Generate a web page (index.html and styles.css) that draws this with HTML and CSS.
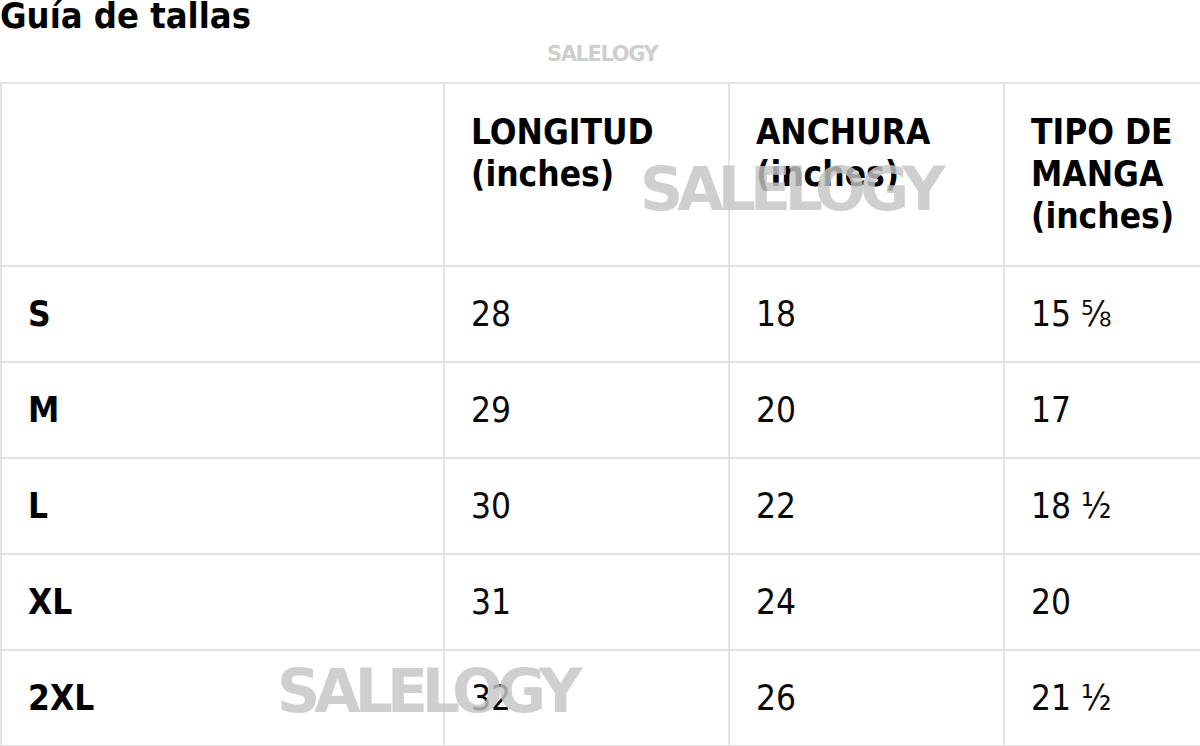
FILE: index.html
```html
<!DOCTYPE html>
<html lang="es">
<head>
<meta charset="utf-8">
<title>Guía de tallas</title>
<link rel="stylesheet" href="styles.css">
</head>
<body>
<div class="page">
  <h1 class="title">Guía de tallas</h1>
  <table class="sizes">
    <colgroup>
      <col class="c1"><col class="c2"><col class="c3"><col class="c4">
    </colgroup>
    <thead>
      <tr>
        <th></th>
        <th>LONGITUD<br>(inches)</th>
        <th>ANCHURA<br>(inches)</th>
        <th>TIPO DE<br>MANGA<br>(inches)</th>
      </tr>
    </thead>
    <tbody>
      <tr><th>S</th><td>28</td><td>18</td><td>15 ⅝</td></tr>
      <tr><th>M</th><td>29</td><td>20</td><td>17</td></tr>
      <tr><th>L</th><td>30</td><td>22</td><td>18 ½</td></tr>
      <tr><th>XL</th><td>31</td><td>24</td><td>20</td></tr>
      <tr><th>2XL</th><td>32</td><td>26</td><td>21 ½</td></tr>
    </tbody>
  </table>
  <div class="wm wm-small">SALELOGY</div>
  <div class="wm wm-big wm-top">SALELOGY</div>
  <div class="wm wm-big wm-bottom">SALELOGY</div>
</div>
</body>
</html>
```

FILE: styles.css
```css
html, body {
  margin: 0;
  padding: 0;
  background: #fff;
  overflow: hidden;
}
.page {
  position: relative;
  width: 1200px;
  height: 746px;
  overflow: hidden;
  font-family: "DejaVu Sans Condensed", "DejaVu Sans", sans-serif;
  font-stretch: semi-condensed;
  color: #0a0a0a;
}
.title {
  margin: 0;
  font-size: 36px;
  line-height: 32px;
  font-weight: 700;
  color: #000;
}
.sizes {
  margin-top: 50px;
  width: 1210px;
  table-layout: fixed;
  border-collapse: collapse;
  font-size: 35px;
  line-height: 42px;
}
.c1 { width: 443px; }
.c2 { width: 285px; }
.c3 { width: 275px; }
.c4 { width: 207px; }
.sizes th, .sizes td {
  border: 2px solid #e4e4e4;
  padding: 0 0 0 26px;
  text-align: left;
}
.sizes thead th {
  vertical-align: top;
  padding-top: 27px;
  padding-bottom: 28px;
  font-weight: 700;
  color: #000;
}
.sizes tbody tr {
  height: 96px;
}
.sizes tbody th {
  font-weight: 700;
  color: #000;
  vertical-align: middle;
}
.sizes tbody td {
  font-weight: 400;
  vertical-align: middle;
}
.wm {
  position: absolute;
  font-family: "DejaVu Sans", sans-serif;
  font-stretch: normal;
  font-weight: 700;
  color: rgba(196, 196, 196, 0.82);
  white-space: nowrap;
  pointer-events: none;
}
.wm-small {
  left: 547px;
  top: 43px;
  font-size: 21px;
  line-height: 22px;
  letter-spacing: -1.4px;
  color: rgba(200, 200, 200, 0.9);
}
.wm-big {
  font-size: 60px;
  line-height: 62px;
  letter-spacing: -6px;
}
.wm-top {
  left: 640px;
  top: 158px;
}
.wm-bottom {
  left: 277px;
  top: 660px;
}
```
